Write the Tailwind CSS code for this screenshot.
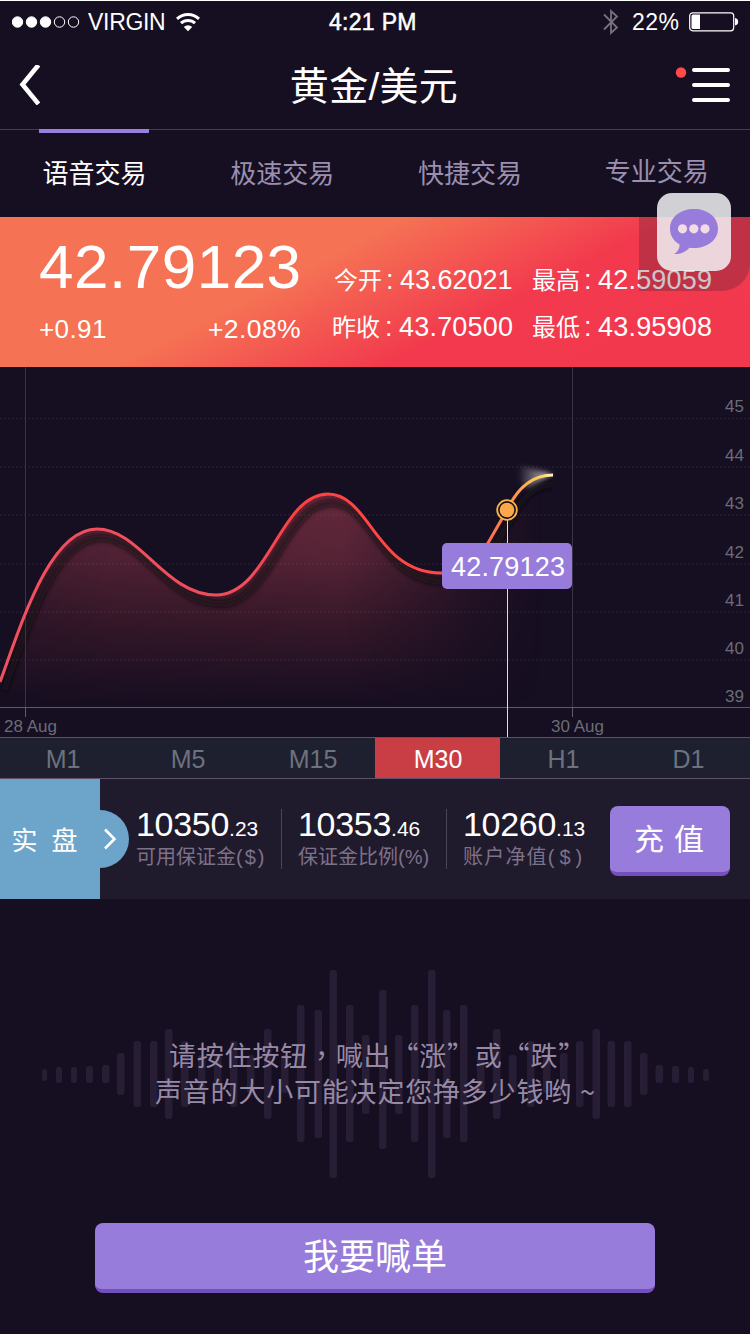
<!DOCTYPE html>
<html lang="zh-CN">
  <head>
    <meta charset="UTF-8" />
    <meta name="viewport" content="width=device-width, initial-scale=1.0" />
    <title>黄金/美元</title>
    <script src="https://cdn.jsdelivr.net/npm/@tailwindcss/browser@4"></script>
  </head>
  <body
    class="w-[750px] h-[1334px] overflow-hidden bg-[#160e21] text-white font-['Liberation_Sans','Noto_Sans_CJK_SC',sans-serif]"
  >
    <div class="relative flex flex-col w-[750px] h-[1334px]">
      <!-- Status bar -->
      <header class="flex items-center h-11 border-t border-white text-2xl leading-none">
        <div class="flex items-center w-[329px] pl-3 -mt-0.5">
          <svg class="w-[68px] h-3" viewBox="0 0 68 12" fill="#fff" stroke="#fff">
            <circle cx="5.5" cy="6" r="5.2" />
            <circle cx="19.5" cy="6" r="5.2" />
            <circle cx="33.5" cy="6" r="5.2" />
            <circle cx="47.5" cy="6" r="5.2" fill="none" />
            <circle cx="61.5" cy="6" r="5.2" fill="none" />
          </svg>
          <span class="ml-2 mt-0.5 w-[78px] text-[23px] tracking-[-0.3px]">VIRGIN</span>
          <svg class="ml-[10px] w-6 h-5" viewBox="0 0 24 20" fill="none" stroke="#fff" stroke-width="3">
            <path d="M1 6.8a16 16 0 0 1 22 0" />
            <path d="M5 11.2a10.2 10.2 0 0 1 14 0" />
            <path d="M12 19.3l-4.2-4.4a6 6 0 0 1 8.400 0z" fill="#fff" stroke="none" />
          </svg>
        </div>
        <span class="w-[274px] text-[23px] tracking-[0.3px] [-webkit-text-stroke:0.5px_white]">4:21 PM</span>
        <svg class="w-4 h-7 -mt-0.5" viewBox="0 0 16 28" fill="none" stroke="#77727f" stroke-width="1.8">
          <path d="M1 6.500l13 13-6 5.500V3l6 5.500-13 13" />
        </svg>
        <span class="ml-[13px] w-[49px] text-[23px] tracking-[0.5px]">22%</span>
        <svg class="ml-2 w-[50px] h-5 -mt-0.5" viewBox="0 0 50 20" fill="none" stroke="#fff">
          <rect x="0.700" y="0.800" width="44" height="18" rx="3" stroke-width="1.200" />
          <path d="M2.500 4a1.500 1.500 0 0 1 1.500-1.500h7v14.600H4a1.500 1.500 0 0 1-1.500-1.500z" fill="#fff" stroke="none" />
          <path d="M46 6a3.800 3.800 0 0 1 0 7.500z" fill="#fff" stroke="none" />
        </svg>
      </header>

      <!-- Title bar -->
      <nav class="flex items-center justify-between h-[86px] pl-[19px] pr-5 pb-[3px] border-b border-[#48385d]">
        <svg class="w-[54px] h-10" viewBox="0 0 54 40" fill="none" stroke="#fff" stroke-width="4.600">
          <path d="M19.500 0L3.500 19.500L19.500 39" />
        </svg>
        <h1 class="text-[39px] leading-[60px] tracking-[0.3px] pt-1">黄金/美元</h1>
        <svg class="w-[55px] h-10" viewBox="0 0 55 40">
          <circle cx="6" cy="7.500" r="5.200" fill="#ff4a47" />
          <path d="M19 5h34M19 20h34M19 35h34" stroke="#fff" stroke-width="4" stroke-linecap="round" />
        </svg>
      </nav>

      <!-- Trading modes -->
      <div class="relative grid grid-cols-4 h-[87px] pt-px pl-px text-[26px] leading-[86px] text-center text-[#9b8fb0]">
        <span class="absolute left-[39px] -top-px w-[110px] h-1 bg-[#9b7fe0]"></span>
        <a class="text-white">语音交易</a>
        <a class="pl-px">极速交易</a>
        <a class="pl-0.5">快捷交易</a>
        <a class="pl-px -mt-0.5">专业交易</a>
      </div>

      <!-- Quote -->
      <section
        class="flex h-[150px] pl-[39px] bg-[linear-gradient(153deg,#f57254_0%,#f57254_39%,#f2394d_65%,#f2384c_100%)]"
      >
        <div class="w-[262px]">
          <p class="text-[62px] leading-[72px] mt-3.5 tracking-[0.5px]">42.79123</p>
          <p class="flex justify-between mt-[10px] text-[26px] leading-8 tracking-[0.4px]">
            <span>+0.91</span><span class="text-[26.5px]">+2.08%</span>
          </p>
        </div>
        <div class="grid grid-cols-[199px_181px] auto-rows-[47px] items-center ml-8 mt-10 text-[27px] h-[94px]">
          <p class="flex items-center pl-px"><span class="w-[52px] text-2xl">今开</span><span class="w-[14px]">:</span>43.62021</p>
          <p class="flex items-center"><span class="w-[52px] text-2xl">最高</span><span class="w-[14px]">:</span><span class="tracking-[0.2px]">42.59059</span></p>
          <p class="flex items-center -ml-px"><span class="w-[53px] text-2xl">昨收</span><span class="w-[14px]">:</span><span class="tracking-[0.2px]">43.70500</span></p>
          <p class="flex items-center"><span class="w-[52px] text-2xl">最低</span><span class="w-[14px]">:</span><span class="tracking-[0.2px]">43.95908</span></p>
        </div>
      </section>

      <!-- Chart -->
      <svg class="w-[750px] h-[370px]" viewBox="0 367 750 370" fill="none">
        <defs>
          <linearGradient id="line" gradientUnits="userSpaceOnUse" x1="0" y1="0" x2="553" y2="0">
            <stop offset="0" stop-color="#f2505e" />
            <stop offset="0.450" stop-color="#f04c5a" />
            <stop offset="0.530" stop-color="#ff3f41" />
            <stop offset="0.800" stop-color="#ff4a47" />
            <stop offset="0.885" stop-color="#ff6e50" />
            <stop offset="0.930" stop-color="#fb9347" />
            <stop offset="0.980" stop-color="#ffd85c" />
            <stop offset="1" stop-color="#fff6c8" />
          </linearGradient>
          <linearGradient id="fillY" gradientUnits="userSpaceOnUse" x1="0" y1="494" x2="0" y2="706">
            <stop offset="0" stop-color="#6a2a3d" stop-opacity="0.950" />
            <stop offset="0.300" stop-color="#64283a" stop-opacity="0.820" />
            <stop offset="0.650" stop-color="#5c2432" stop-opacity="0.420" />
            <stop offset="1" stop-color="#5c2432" stop-opacity="0" />
          </linearGradient>
          <linearGradient id="fadeX" gradientUnits="userSpaceOnUse" x1="0" y1="0" x2="553" y2="0">
            <stop offset="0" stop-color="#aaa" />
            <stop offset="0.200" stop-color="#e4e4e4" />
            <stop offset="0.620" stop-color="#fff" />
            <stop offset="0.740" stop-color="#aaa" />
            <stop offset="0.860" stop-color="#444" />
            <stop offset="0.980" stop-color="#000" />
          </linearGradient>
          <linearGradient id="tail" gradientUnits="userSpaceOnUse" x1="552" y1="475" x2="518" y2="472">
            <stop offset="0" stop-color="#fff" stop-opacity="0.750" />
            <stop offset="0.600" stop-color="#fff" stop-opacity="0.300" />
            <stop offset="1" stop-color="#fff" stop-opacity="0" />
          </linearGradient>
          <clipPath id="under">
            <path d="M0 682C22 622 50 529 97 529C140 529 165 595 216 595C268 595 280 494 328 494C370 494 376 573 441 573C470 573 478 560 488 543L507 510C516 491 530 475 553 475V737H0Z" />
          </clipPath>
          <mask id="fade"><rect x="0" y="367" width="560" height="370" fill="url(#fadeX)" /></mask>
          <filter id="soft" x="-10%" y="-20%" width="120%" height="140%"><feGaussianBlur stdDeviation="2.500" /></filter>
          <filter id="glow" x="-30%" y="-50%" width="160%" height="200%"><feGaussianBlur stdDeviation="2.800" /></filter>
        </defs>

        <!-- area -->
        <g clip-path="url(#under)">
          <rect x="0" y="480" width="560" height="230" fill="url(#fillY)" mask="url(#fade)" />
          <path
            d="M0 682C22 622 50 529 97 529C140 529 165 595 216 595C268 595 280 494 328 494C370 494 376 573 441 573C470 573 478 560 488 543L507 510C516 491 530 475 553 475"
            transform="translate(4 9)" stroke="#120a14" stroke-opacity="0.800" stroke-width="6" filter="url(#soft)"
          />
        </g>

        <!-- grid -->
        <path
          d="M0 418.500H750M0 467H750M0 515H750M0 564H750M0 612H750M0 660H750"
          stroke="#8d86a8" stroke-opacity="0.120" stroke-width="1.500" stroke-dasharray="2 2"
        />
        <path d="M25.500 367V717M572.500 367V717" stroke="#3a3245" />
        <path d="M25.500 707V717M572.500 707V717M0 707.500H750" stroke="#625671" />

        <path d="M552 474L514 464Q518 480 527 489Z" fill="url(#tail)" filter="url(#glow)" />
        <path
          d="M0 682C22 622 50 529 97 529C140 529 165 595 216 595C268 595 280 494 328 494C370 494 376 573 441 573C470 573 478 560 488 543L507 510C516 491 530 475 553 475"
          stroke="url(#line)" stroke-width="3"
        />

        <!-- cursor -->
        <path d="M507.500 520V737" stroke="#ffe84e" />
        <circle cx="507" cy="510" r="9.800" fill="#160e21" stroke="#fbb545" stroke-width="1.800" />
        <circle cx="507" cy="510" r="7.300" fill="#fca84a" />
        <rect x="442" y="543" width="130" height="46" rx="5" fill="#987cdc" />
        <text x="451" y="575.500" font-size="27" fill="#fff" textLength="114">42.79123</text>

        <g fill="#6a6c77" font-size="17">
          <g text-anchor="end">
            <text x="744" y="412">45</text>
            <text x="744" y="461">44</text>
            <text x="744" y="509">43</text>
            <text x="744" y="558">42</text>
            <text x="744" y="606">41</text>
            <text x="744" y="654">40</text>
            <text x="744" y="702">39</text>
          </g>
          <text x="4" y="732">28 Aug</text>
          <text x="551" y="732">30 Aug</text>
        </g>
      </svg>

      <!-- Intervals -->
      <div
        class="grid grid-cols-6 h-[42px] border-y border-[#5d5068] bg-[#1e2030] text-[25px] leading-[42px] text-center text-[#6c727e]"
      >
        <span class="pl-px">M1</span>
        <span class="pl-px">M5</span>
        <span class="pl-px">M15</span>
        <span class="pl-px h-10 leading-[42px] bg-[#c83e44] text-white">M30</span>
        <span class="pl-0.5">H1</span>
        <span class="pl-0.5">D1</span>
      </div>

      <!-- Account -->
      <section class="flex h-[120px] bg-[#201a2d]">
        <div class="relative flex items-center justify-center gap-[14px] w-[100px] bg-[#6da4ca] text-[26px] pr-[11px] pt-1">
          <span>实</span><span>盘</span>
          <span class="absolute left-[99px] top-[31px] w-[30px] h-[58px] rounded-r-full bg-[#6da4ca]"></span>
          <svg class="absolute left-[103px] top-[49px] w-4 h-[22px]" viewBox="0 0 16 22" fill="none" stroke="#fff" stroke-width="2.600">
            <path d="M2 1.500L11.500 11L2 20.500" />
          </svg>
        </div>
        <div class="flex pt-[30px]">
          <div class="w-[182px] h-[60px] pl-9 border-r border-[#4d4459]">
            <p class="text-[34px] leading-[30px] tracking-[-0.3px]">10350<span class="text-[21px] tracking-normal">.23</span></p>
            <p class="text-xl leading-[26px] text-[#7d7189] whitespace-nowrap">可用保证金<span class="tracking-[2px]">($)</span></p>
          </div>
          <div class="w-[165px] h-[60px] pl-4 border-r border-[#4d4459]">
            <p class="text-[34px] leading-[30px] tracking-[-0.3px]">10353<span class="text-[21px] tracking-normal">.46</span></p>
            <p class="text-xl leading-[26px] text-[#7d7189] whitespace-nowrap">保证金比例(%)</p>
          </div>
          <div class="w-[163px] h-[60px] pl-4">
            <p class="text-[34px] leading-[30px] tracking-[-0.3px]">10260<span class="text-[21px] tracking-normal">.13</span></p>
            <p class="text-xl leading-[26px] text-[#7d7189] whitespace-nowrap tracking-[1.2px]">账户净值<span class="tracking-[5px]">($)</span></p>
          </div>
        </div>
        <button
          class="flex justify-center gap-[10px] w-[120px] h-[70px] mt-[27px] rounded-lg bg-[#987cdc] border-b-4 border-[#7350bd] text-[30px] leading-[68px] pr-0.5"
        >
          <span>充</span><span>值</span>
        </button>
      </section>

      <!-- Voice prompt -->
      <section class="grid h-[324px]">
        <svg id="wave" class="col-start-1 row-start-1 w-[750px] h-[324px]" viewBox="0 899 750 324" fill="#271d34"></svg>
        <div class="col-start-1 row-start-1 z-10 pt-[138px] text-[27px] leading-9 tracking-[0.8px] text-[#968aa6] whitespace-nowrap font-['Noto_Sans_CJK_SC',sans-serif]">
          <p class="pl-[169px] h-9">请按住按钮<span lang="zh-TW" class="font-['Noto_Sans_CJK_TC',sans-serif]">，</span>喊出“涨”或“跌”</p>
          <p class="pl-[155px] h-9">声音的大小可能决定您挣多少钱哟<span class="ml-2">~</span></p>
        </div>
      </section>

      <button
        class="w-[560px] h-[70px] mx-auto rounded-lg bg-[#987cdc] border-b-4 border-[#7350bd] text-4xl leading-[66px] pt-0.5"
      >
        我要喊单
      </button>

      <!-- Floating chat button -->
      <div class="absolute left-[639px] top-[217px] w-[111px] h-[74px] rounded-br-[28px] bg-[#2b1c2e]/25"></div>
      <div class="absolute left-[657px] top-[193px] flex items-center justify-center w-[74px] h-[78px] rounded-[15px] bg-[#f6f6f8]/84">
        <svg class="w-12 h-[46px]" viewBox="0 0 48 46">
          <path
            d="M24 0C37.500 0 48 8 48 19.500S37.500 39 24 39Q21.500 39 19.500 38.700C15.500 43 9.500 45.500 4 45C7.500 43 9.800 39.500 9.500 35.500C3.500 31.800 0 26.500 0 19.500C0 8 10.500 0 24 0Z"
            fill="#987cdc"
          />
          <g fill="#f4dce4">
            <circle cx="12.500" cy="19.800" r="4.600" />
            <circle cx="23.800" cy="19.800" r="4.600" />
            <circle cx="35" cy="19.800" r="4.600" />
          </g>
        </svg>
      </div>
    </div>

    <script>
      // x, top, bottom, width of each bar
      const bars = [
        [42, 1069, 1081, 5], [56, 1067, 1083, 6], [71, 1067, 1083, 6], [86, 1066, 1083, 7],
        [102, 1065, 1083], [117, 1053, 1095], [133.5, 1041, 1107], [150, 1041, 1107],
        [165, 1029, 1119], [181, 1041, 1107], [198, 1055, 1093], [214, 1055, 1093],
        [230, 1041, 1107], [247, 1055, 1093], [264, 1029, 1119], [281, 1055, 1093],
        [297, 1005, 1142], [314.5, 1010, 1138], [329.5, 970, 1178], [346, 1005, 1142],
        [362, 1035, 1114], [379, 990, 1149], [395, 1035, 1114], [411, 1005, 1142],
        [428, 970, 1178], [443, 1010, 1138], [460, 1005, 1142], [477, 1055, 1093],
        [493, 1029, 1119], [509, 1055, 1093], [527, 1041, 1107], [543, 1055, 1093],
        [560, 1053, 1095], [576, 1041, 1107], [592.5, 1029, 1119], [607.5, 1041, 1107],
        [624, 1041, 1107], [640, 1053, 1095], [655.5, 1065, 1083], [672, 1066, 1083, 7],
        [688, 1067, 1083, 6], [703, 1069, 1081, 6],
      ];
      document.getElementById("wave").innerHTML = bars
        .map(([x, top, bottom, w = 7.5]) => `<rect x="${x}" y="${top}" width="${w}" height="${bottom - top}" rx="2.5" />`)
        .join("");
    </script>
  </body>
</html>
